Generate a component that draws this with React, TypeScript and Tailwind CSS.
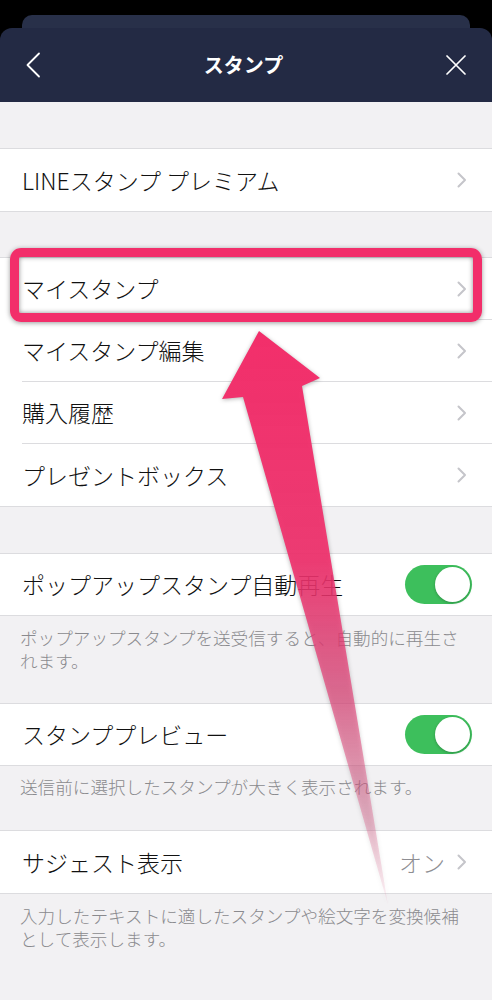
import React from 'react';

const font = { fontFamily: '"Noto Sans CJK JP", "Noto Sans", sans-serif' };

function Chevron() {
  return (
    <svg width="10" height="16" viewBox="0 0 10 16" className="shrink-0">
      <path d="M1.5 1.5 L8 8 L1.5 14.5" fill="none" stroke="#c5c5ca" strokeWidth="2" strokeLinecap="round" strokeLinejoin="round" />
    </svg>
  );
}

function Toggle() {
  return (
    <div className="w-[67px] h-[39px] rounded-full bg-[#3dbf5c] flex justify-end items-center p-[2px] shrink-0">
      <div className="w-[35px] h-[35px] rounded-full bg-white shadow-[0_1px_3px_rgba(0,0,0,0.25)]" />
    </div>
  );
}

function LinkRow({ label, last, value }: { label: string; last?: boolean; value?: string }) {
  return (
    <div className="pl-[22px] bg-white">
      <div className={`h-[62px] flex items-center justify-between pr-[25px] ${last ? '' : 'border-b border-[#dcdcdf]'}`}>
        <span className="text-[23px] font-light text-[#111]">{label}</span>
        <div className="flex items-center gap-[12px]">
          {value && <span className="text-[23px] font-light text-[#8e8e93]">{value}</span>}
          <Chevron />
        </div>
      </div>
    </div>
  );
}

export default function App() {
  return (
    <div className="relative w-[492px] h-[1000px] overflow-hidden bg-[#f2f1f3]" style={font}>
      {/* header with stacked sheet */}
      <div className="bg-black pt-[15px]">
        <div className="mx-[22px] h-[13px] rounded-t-[10px] bg-[#283049]" />
        <div className="h-[74px] rounded-t-[12px] bg-[#232a44] flex items-center justify-between pl-[25px] pr-[26px]">
          <svg width="16" height="26" viewBox="0 0 16 26">
            <path d="M14 1.5 L2.5 13 L14 24.5" fill="none" stroke="#fff" strokeWidth="1.8" strokeLinecap="round" strokeLinejoin="round" />
          </svg>
          <span className="text-white text-[20px] font-bold">スタンプ</span>
          <svg width="20" height="20" viewBox="0 0 20 20">
            <path d="M1 1 L19 19 M19 1 L1 19" fill="none" stroke="#fff" strokeWidth="1.7" strokeLinecap="round" />
          </svg>
        </div>
      </div>

      <div className="h-[46px]" />
      <div className="border-y border-[#dcdcdf]">
        <LinkRow label="LINEスタンプ プレミアム" last />
      </div>

      <div className="h-[45px]" />
      <div className="border-y border-[#dcdcdf]">
        <LinkRow label="マイスタンプ" />
        <LinkRow label="マイスタンプ編集" />
        <LinkRow label="購入履歴" />
        <LinkRow label="プレゼントボックス" last />
      </div>

      <div className="h-[46px]" />
      <div className="border-y border-[#dcdcdf] bg-white h-[63px] pl-[22px] pr-[20px] flex items-center justify-between">
        <span className="text-[23px] font-light text-[#111]">ポップアップスタンプ自動再生</span>
        <Toggle />
      </div>
      <div className="h-[87px] px-[20px] pt-[10px] text-[17.6px] font-light leading-[23px] text-[#8a8a8e]">
        ポップアップスタンプを送受信すると、自動的に再生さ<br />れます。
      </div>

      <div className="border-y border-[#dcdcdf] bg-white h-[63px] pl-[22px] pr-[20px] flex items-center justify-between">
        <span className="text-[23px] font-light text-[#111]">スタンププレビュー</span>
        <Toggle />
      </div>
      <div className="h-[64px] px-[20px] pt-[9px] text-[17.6px] font-light leading-[23px] text-[#8a8a8e]">
        送信前に選択したスタンプが大きく表示されます。
      </div>

      <div className="border-y border-[#dcdcdf]">
        <LinkRow label="サジェスト表示" value="オン" last />
      </div>
      <div className="px-[20px] pt-[10px] text-[17.6px] font-light leading-[23px] text-[#8a8a8e]">
        入力したテキストに適したスタンプや絵文字を変換候補<br />として表示します。
      </div>

      {/* highlight box */}
      <div className="absolute left-[10px] top-[248px] w-[472px] h-[74px] rounded-[11px] border-[9px] border-[#f22e6a] shadow-[0_1px_5px_rgba(0,0,0,0.4),inset_0_0_5px_rgba(0,0,0,0.45)]" />

      {/* arrow */}
      <svg className="absolute left-0 top-0 pointer-events-none drop-shadow-[0_1px_2px_rgba(0,0,0,0.3)]" width="492" height="1000" viewBox="0 0 492 1000">
        <defs>
          <linearGradient id="arrowFade" x1="0" y1="330" x2="0" y2="905" gradientUnits="userSpaceOnUse">
            <stop offset="0" stopColor="#f22e6a" stopOpacity="1" />
            <stop offset="0.4" stopColor="#f0306c" stopOpacity="0.92" />
            <stop offset="0.65" stopColor="#e2457a" stopOpacity="0.68" />
            <stop offset="0.85" stopColor="#e05a88" stopOpacity="0.38" />
            <stop offset="1" stopColor="#e07098" stopOpacity="0.08" />
          </linearGradient>
        </defs>
        <polygon points="259,331 320,378 302,386 388,905 243,397 222,399" fill="url(#arrowFade)" />
      </svg>
    </div>
  );
}
